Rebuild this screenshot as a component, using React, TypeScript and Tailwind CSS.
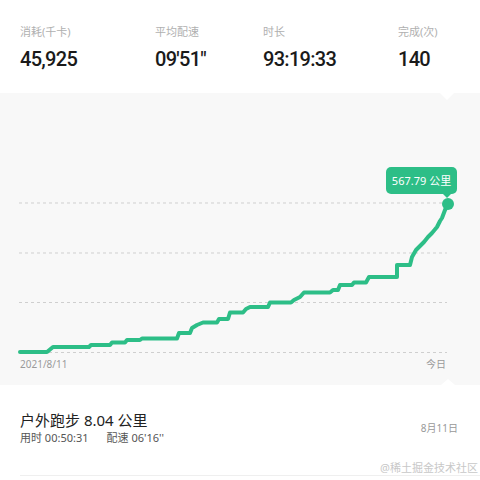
import React from "react";

const FONT = '"Noto Sans", "Noto Sans CJK SC", sans-serif';
const NUM_FONT = 'Roboto, "Noto Sans CJK SC", sans-serif';

const stats = [
  { label: "消耗(千卡)", value: "45,925", width: "w-[135px]" },
  { label: "平均配速", value: "09'51\"", width: "w-[108px]" },
  { label: "时长", value: "93:19:33", width: "w-[135px]" },
  { label: "完成(次)", value: "140", width: "flex-1" },
];

// stepped cumulative distance line, in page coordinates
const LINE =
  "M20 352 H47 L53 347 H89 L91 345 H110 L112 342.5 H125 L127 340 H140 L142 338.5 H177 L179 333 H190 L192 328 L197 325 L203 322.5 H217 L219 319 H228 L230 312.5 H243 L246 309 L250 307 H268 L270 302.5 H291 L294 300 L300 297 L304 292.5 H330 L333 290 H338 L340 285 H352 L354 282.5 H366 L369 277 H397 V265 H410 L412 257 L416 250 L420 246 L424 242 L428 237 L432 233 L437 227 L440 221 L442 218 L445 210 L448 204";

function Chart() {
  return (
    <div className="relative bg-[#f8f8f8] h-[292px] flex flex-col">
      {/* notches */}
      <div className="absolute top-0 left-[440px] w-0 h-0 border-l-[7px] border-r-[7px] border-t-[7px] border-l-transparent border-r-transparent border-t-white" />
      <div className="absolute bottom-0 left-[441px] w-0 h-0 border-l-[7px] border-r-[7px] border-b-[6px] border-l-transparent border-r-transparent border-b-white" />

      <svg width="480" height="264" viewBox="0 93 480 264" className="block">
        {[203, 253, 302.5, 352.5].map((y) => (
          <line
            key={y}
            x1="19"
            x2="447"
            y1={y}
            y2={y}
            stroke="#cfcfcf"
            strokeWidth="1"
            strokeDasharray="3 3"
          />
        ))}
        <path
          d={LINE}
          fill="none"
          stroke="#2dbe87"
          strokeWidth="4"
          strokeLinejoin="round"
          strokeLinecap="round"
        />
        <circle cx="448" cy="204" r="6" fill="#2dbe87" />
      </svg>

      {/* tooltip */}
      <div className="absolute left-[386px] top-[74px] w-[71px] h-[27px] rounded-[5px] bg-[#2dbe87] flex items-center justify-center">
        <span className="text-white text-[11px] leading-none" style={{ fontFamily: FONT }}>
          567.79 公里
        </span>
        <div className="absolute -bottom-[4px] left-[57px] w-0 h-0 border-l-[4px] border-r-[4px] border-t-[4px] border-l-transparent border-r-transparent border-t-[#2dbe87]" />
      </div>

      <div className="flex justify-between pl-[20px] pr-[34px] text-[10px] leading-[14px] text-[#9a9a9a]" style={{ fontFamily: FONT }}>
        <span>2021/8/11</span>
        <span>今日</span>
      </div>
    </div>
  );
}

export default function App() {
  return (
    <div className="w-[480px] h-[480px] bg-white overflow-hidden" style={{ fontFamily: FONT }}>
      {/* Stats header */}
      <div className="h-[93px] flex pl-[20px] pt-[24px]">
        {stats.map((s) => (
          <div key={s.label} className={`${s.width} flex flex-col`}>
            <span className="text-[11px] leading-[16px] text-[#b0b0b0]">{s.label}</span>
            <span
              className="mt-[7px] text-[20px] leading-[24px] font-medium text-[#1a1a1a] tracking-[-0.7px]"
              style={{ fontFamily: NUM_FONT }}
            >
              {s.value}
            </span>
          </div>
        ))}
      </div>

      <Chart />

      {/* Latest run */}
      <div className="flex items-center justify-between pl-[20px] pr-[22px] pt-[26px]">
        <div className="flex flex-col">
          <span className="text-[15px] leading-[19px] text-[#222]">户外跑步 8.04 公里</span>
          <span className="text-[11px] leading-[15px] text-[#555] flex gap-[18px]">
            <span>用时 00:50:31</span>
            <span>配速 06'16''</span>
          </span>
        </div>
        <span className="text-[10px] text-[#999]">8月11日</span>
      </div>

      <div className="relative mt-[24px] ml-[20px] border-b border-[#efefef] h-[7px]">
        <span className="absolute right-[2px] -top-[8px] text-[11px] leading-[14px] text-[#c8c8c8] bg-white pl-[2px]">
          @稀土掘金技术社区
        </span>
      </div>
    </div>
  );
}
